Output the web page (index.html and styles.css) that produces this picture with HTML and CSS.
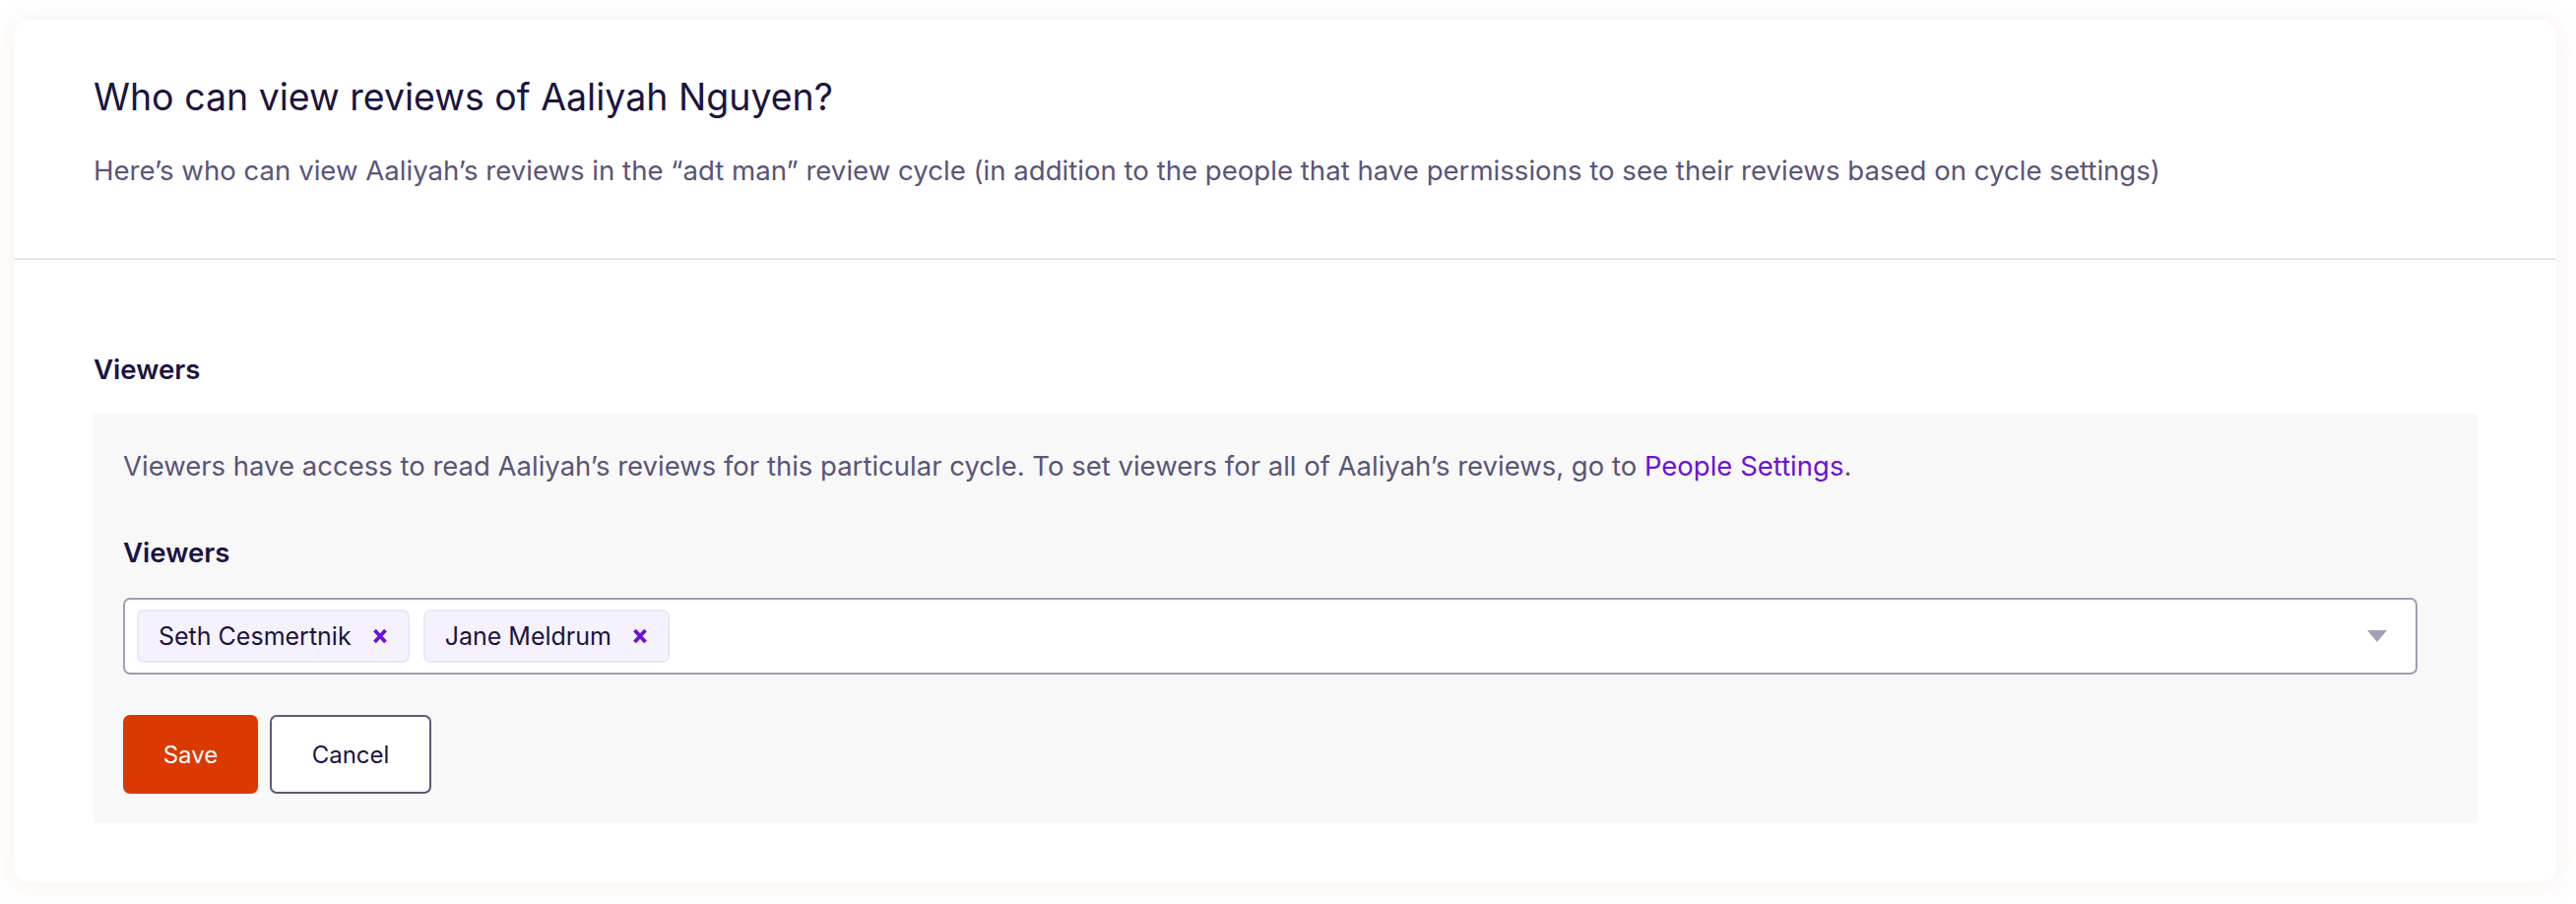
FILE: index.html
```html
<!DOCTYPE html>
<html>
<head>
<meta charset="utf-8">
<link rel="stylesheet" href="styles.css">
</head>
<body>
<div class="page">
  <div class="card">
    <div class="card-header">
      <h1 class="title">Who can view reviews of Aaliyah Nguyen?</h1>
      <p class="subtitle">Here’s who can view Aaliyah’s reviews in the “adt man” review cycle (in addition to the people that have permissions to see their reviews based on cycle settings)</p>
    </div>
    <div class="card-body">
      <h2 class="section-label">Viewers</h2>
      <div class="panel">
        <p class="panel-text">Viewers have access to read Aaliyah’s reviews for this particular cycle. To set viewers for all of Aaliyah’s reviews, go to <a class="link" href="#">People Settings</a>.</p>
        <h3 class="field-label">Viewers</h3>
        <div class="select">
          <div class="chips">
            <span class="chip">Seth Cesmertnik<svg class="chip-x" viewBox="0 0 16 16" width="16" height="16"><path d="M2.5 2 L13.5 14 M13.5 2 L2.5 14" stroke="#6a12d8" stroke-width="3.8" stroke-linecap="butt" fill="none"/></svg></span>
            <span class="chip">Jane Meldrum<svg class="chip-x" viewBox="0 0 16 16" width="16" height="16"><path d="M2.5 2 L13.5 14 M13.5 2 L2.5 14" stroke="#6a12d8" stroke-width="3.8" stroke-linecap="butt" fill="none"/></svg></span>
          </div>
          <svg class="caret" viewBox="0 0 20 12" width="20" height="12"><path d="M0 0 H20 L10 12 Z" fill="#a29eb3"/></svg>
        </div>
        <div class="actions">
          <button class="btn btn-primary">Save</button>
          <button class="btn btn-secondary">Cancel</button>
        </div>
      </div>
    </div>
  </div>
</div>
</body>
</html>
```

FILE: styles.css
```css
* { box-sizing: border-box; }
html, body { margin: 0; padding: 0; background: #ffffff; }
body { font-family: Inter, "Liberation Sans", sans-serif; color: #1c1342; }
.page { padding: 20px 20px 22px 14px; }
.card {
  background: #fff;
  border-radius: 16px;
  box-shadow: 0 2px 22px 6px rgba(222, 186, 170, 0.16);
  overflow: hidden;
}
.card-header { padding: 56px 81px 71px; border-bottom: 2px solid #e6e6e8; }
.title { margin: 0; font-size: 37.5px; font-weight: 400; line-height: 46px; color: #1c1342; }
.subtitle { margin: 33px 0 0; font-size: 27.6px; line-height: 36px; color: #5a5479; }
.card-body { padding: 93px 80px 60px 81px; }
.section-label { margin: 0 0 27px; font-size: 27.6px; font-weight: 600; line-height: 36px; color: #1c1342; }
.panel { background: #f8f8f8; padding: 35px 61px 30px 30px; }
.panel-text { margin: 0; font-size: 27.5px; line-height: 36px; color: #5a5479; }
.link { color: #6a12d8; text-decoration: none; }
.field-label { margin: 52px 0 0; font-size: 27.6px; font-weight: 600; line-height: 36px; color: #1c1342; }
.select {
  margin-top: 28px;
  height: 78px;
  border: 2px solid #a29eb3;
  border-radius: 7px;
  background: #fff;
  display: flex;
  align-items: center;
  justify-content: space-between;
  padding: 0 29px 0 12px;
}
.chips { display: flex; gap: 14px; }
.chip {
  display: inline-flex; align-items: center; gap: 21px;
  height: 54px; padding: 0 20px 0 20px;
  background: #f5f2fd; border: 2px solid #ece6fb; border-radius: 7px;
  font-size: 25px; color: #1c1342;
}
.chip-x { display: block; }
.caret { display: block; }
.actions { margin-top: 41px; display: flex; gap: 12px; }
.btn { height: 80px; border-radius: 7px; font-family: inherit; font-size: 24px; padding: 0; cursor: pointer; }
.btn-primary { width: 137px; background: #dc3900; border: none; color: #fff; }
.btn-secondary { width: 164px; background: #fff; border: 2px solid #5d587a; color: #1c1342; }
```
